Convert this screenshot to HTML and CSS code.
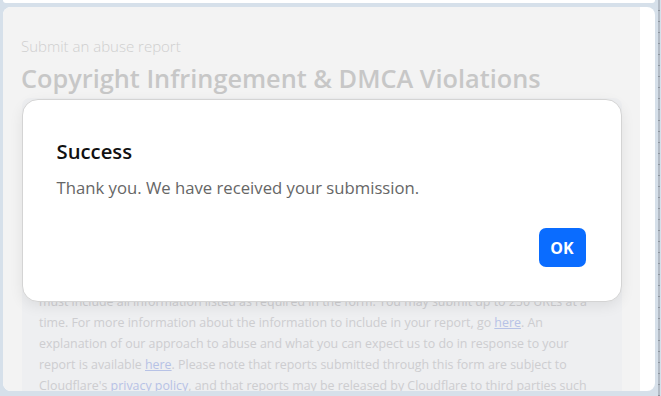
FILE: index.html
```html
<!DOCTYPE html>
<html lang="en">
<head>
    <meta charset="UTF-8">
    <meta name="viewport" content="width=device-width, initial-scale=1.0">
    <title>Submit an abuse report</title>
    <link rel="stylesheet" href="styles.css">
</head>
<body>
    <div class="window">
        <div class="top-card"></div>
        <div class="page">
            <div class="content">
                <div class="form-container">
                    <p class="eyebrow">Submit an abuse report</p>
                    <h1>Copyright Infringement &amp; DMCA Violations</h1>
                    <div class="notice">
                        <p class="notice-title">Before you submit</p>
                        <p>Cloudflare is a network provider offering a reverse proxy, pass-through security service and content distribution network. We are not a hosting provider and we do not control the content of our customers' websites, so we are not able to remove material from the Internet. Reports submitted through this form will be forwarded to the website owner and to the hosting provider where appropriate so that they can take action on the material in question. Please be as specific as you can when describing the problem. Include every URL that is related to the issue. Reports must include all information listed as required in the form. You may submit up to 250 URLs at a time. For more information about the information to include in your report, go <a href="#">here</a>. An explanation of our approach to abuse and what you can expect us to do in response to your report is available <a href="#">here</a>. Please note that reports submitted through this form are subject to Cloudflare's <a href="#">privacy policy</a>, and that reports may be released by Cloudflare to third parties such as the website owner or hosting provider.</p>
                    </div>
                </div>

                <div class="backdrop">
                    <div class="modal">
                        <h2>Success</h2>
                        <p>Thank you. We have received your submission.</p>
                        <div class="modal-actions">
                            <button type="button">OK</button>
                        </div>
                    </div>
                </div>
            </div>
            <div class="gutter"></div>
        </div>
        <div class="ruler"></div>
    </div>
</body>
</html>
```

FILE: styles.css
```css
body {
    margin: 0;
    font-family: "Open Sans", "Noto Sans", sans-serif;
    background-color: #d6e0ea;
    overflow: hidden;
}
.window {
    position: relative;
    height: 396px;
    padding: 0 6px 0 3px;
    box-sizing: border-box;
}
.top-card {
    height: 3px;
    background-color: white;
    border-radius: 0 0 8px 8px;
}
.page {
    display: flex;
    margin-top: 4px;
    height: 384px;
    background-color: white;
    border-radius: 8px;
    overflow: hidden;
}
.content {
    position: relative;
    width: 637px;
    background-color: #f3f3f3;
    overflow: hidden;
}
.gutter {
    flex: 1;
}
.form-container {
    padding: 29px 18px 0 18px;
}
.eyebrow {
    margin: 0;
    font-size: 15px;
    font-weight: 300;
    line-height: 20px;
    color: #cfcfcf;
}
h1 {
    margin: 6px 0 0;
    font-size: 25.3px;
    font-weight: 600;
    line-height: 32px;
    color: #c7c7c7;
}
.notice {
    margin: 4px 0 0 1px;
    width: 600px;
    padding: 22px 23px 20px 17px;
    box-sizing: border-box;
    background-color: #eeeff1;
    border-radius: 8px;
}
.notice p {
    margin: 0;
    font-size: 12.4px;
    line-height: 21px;
    color: #cdcdd0;
}
.notice .notice-title {
    margin-bottom: 24px;
    font-weight: 600;
}
.notice a {
    color: #b7c2e6;
}
.backdrop {
    position: absolute;
    top: 0;
    left: 0;
    right: 0;
    bottom: 0;
    display: flex;
    align-items: flex-start;
    justify-content: center;
    padding-top: 92px;
}
.modal {
    width: 600px;
    height: 203px;
    padding: 37px 35px 0 34px;
    box-sizing: border-box;
    background-color: white;
    border: 1px solid #d4d4d4;
    border-radius: 16px;
    box-shadow: 0 4px 14px rgba(0,0,0,0.08);
}
.modal h2 {
    margin: 0;
    font-size: 20.3px;
    font-weight: 600;
    line-height: 28px;
    color: #111;
}
.modal p {
    margin: 11px 0 0;
    font-size: 16.7px;
    line-height: 24px;
    color: #666;
}
.modal-actions {
    display: flex;
    justify-content: flex-end;
    margin-top: 28px;
}
.modal-actions button {
    width: 47px;
    height: 39px;
    padding: 0;
    background-color: #0a6cff;
    color: white;
    font-family: inherit;
    font-size: 16px;
    font-weight: 700;
    border: none;
    border-radius: 7px;
    cursor: pointer;
}
.ruler {
    position: absolute;
    top: 0;
    right: 1px;
    width: 2px;
    height: 396px;
    background: repeating-linear-gradient(to bottom, #b4bcc6 0, #b4bcc6 10px, #8d959e 10px, #8d959e 11px);
}
```
